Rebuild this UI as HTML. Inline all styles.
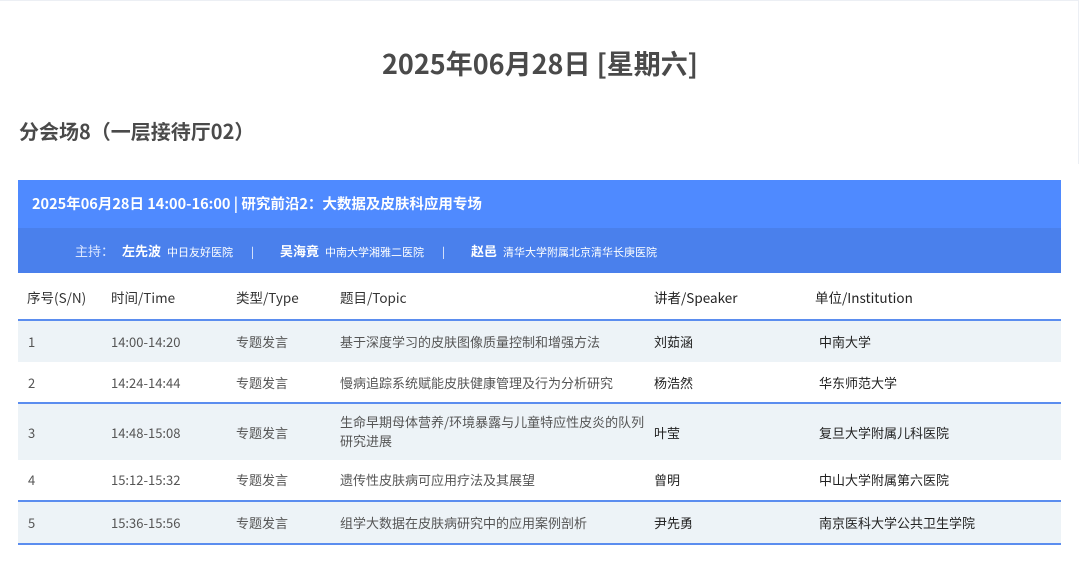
<!DOCTYPE html>
<html><head><meta charset="utf-8"><style>
*{margin:0;padding:0;box-sizing:border-box}
body{width:1080px;height:563px;background:#fff;font-family:"Noto Sans CJK SC","Liberation Sans",sans-serif;color:#333;position:relative;overflow:hidden}
.top{position:absolute;left:0;top:0;width:1079px;height:164px;border-top:1px solid #eceff4;border-right:1px solid #eceff4}
h1{position:absolute;top:44px;left:0;width:1080px;text-align:center;font-size:27px;line-height:38px;font-weight:bold;color:#4a4a4a}
h2{position:absolute;top:116px;left:19px;font-size:20px;line-height:30px;font-weight:bold;color:#4a4a4a}
.hd{position:absolute;left:18px;top:180px;width:1043px;height:48px;background:#4f8aff;color:#fff;font-weight:bold;font-size:14.5px;line-height:20px;padding:14px 0 0 14px}
.sub{position:absolute;left:18px;top:228px;width:1043px;height:45px;background:#4a80ec;color:#fff;font-size:11px;line-height:18px;padding:14px 0 0 57px}
.sub b{font-size:13px;margin:0 6px 0 8px}
.sub .sep{margin:0 18px}
.sub .l{color:#dbe6ff;font-size:13px}
.row{position:absolute;left:18px;width:1043px;font-size:13px;color:#555}
.row span{position:absolute;line-height:18px}
.c1{left:10px}.c2{left:93px}.c3{left:218px}.c4{left:322px;width:310px}.c5{left:636px;color:#222}.c6{left:801px;color:#222}
.th{font-size:13.5px;color:#333}
.bg{background:#edf3f7}
.line{border-bottom:2px solid #5b8def}
</style></head><body>
<div class="top"></div>
<h1>2025年06月28日 [星期六]</h1>
<h2>分会场8（一层接待厅02）</h2>
<div class="hd">2025年06月28日 14:00-16:00 | 研究前沿2：大数据及皮肤科应用专场</div>
<div class="sub"><span class="l">主持：</span><b>左先波</b>中日友好医院<span class="sep">|</span><b>吴海竟</b>中南大学湘雅二医院<span class="sep">|</span><b>赵邑</b>清华大学附属北京清华长庚医院</div>
<div class="row th line" style="top:273px;height:48px"><span class="c1" style="top:15px;left:9px">序号(S/N)</span><span class="c2" style="top:15px">时间/Time</span><span class="c3" style="top:15px">类型/Type</span><span class="c4" style="top:15px">题目/Topic</span><span class="c5" style="top:15px">讲者/Speaker</span><span class="c6" style="top:15px;left:797px">单位/Institution</span></div>
<div class="row bg" style="top:321px;height:41px"><span class="c1" style="top:12px">1</span><span class="c2" style="top:12px">14:00-14:20</span><span class="c3" style="top:12px">专题发言</span><span class="c4" style="top:12px">基于深度学习的皮肤图像质量控制和增强方法</span><span class="c5" style="top:12px">刘茹涵</span><span class="c6" style="top:12px">中南大学</span></div>
<div class="row line" style="top:362px;height:42px"><span class="c1" style="top:12px">2</span><span class="c2" style="top:12px">14:24-14:44</span><span class="c3" style="top:12px">专题发言</span><span class="c4" style="top:12px">慢病追踪系统赋能皮肤健康管理及行为分析研究</span><span class="c5" style="top:12px">杨浩然</span><span class="c6" style="top:12px">华东师范大学</span></div>
<div class="row bg" style="top:404px;height:56px"><span class="c1" style="top:20px">3</span><span class="c2" style="top:20px">14:48-15:08</span><span class="c3" style="top:20px">专题发言</span><span class="c4" style="top:8px;line-height:19px">生命早期母体营养/环境暴露与儿童特应性皮炎的队列研究进展</span><span class="c5" style="top:20px">叶莹</span><span class="c6" style="top:20px">复旦大学附属儿科医院</span></div>
<div class="row line" style="top:460px;height:42px"><span class="c1" style="top:11px">4</span><span class="c2" style="top:11px">15:12-15:32</span><span class="c3" style="top:11px">专题发言</span><span class="c4" style="top:11px">遗传性皮肤病可应用疗法及其展望</span><span class="c5" style="top:11px">曾明</span><span class="c6" style="top:11px">中山大学附属第六医院</span></div>
<div class="row bg line" style="top:502px;height:43px"><span class="c1" style="top:12px">5</span><span class="c2" style="top:12px">15:36-15:56</span><span class="c3" style="top:12px">专题发言</span><span class="c4" style="top:12px">组学大数据在皮肤病研究中的应用案例剖析</span><span class="c5" style="top:12px">尹先勇</span><span class="c6" style="top:12px">南京医科大学公共卫生学院</span></div>
</body></html>
